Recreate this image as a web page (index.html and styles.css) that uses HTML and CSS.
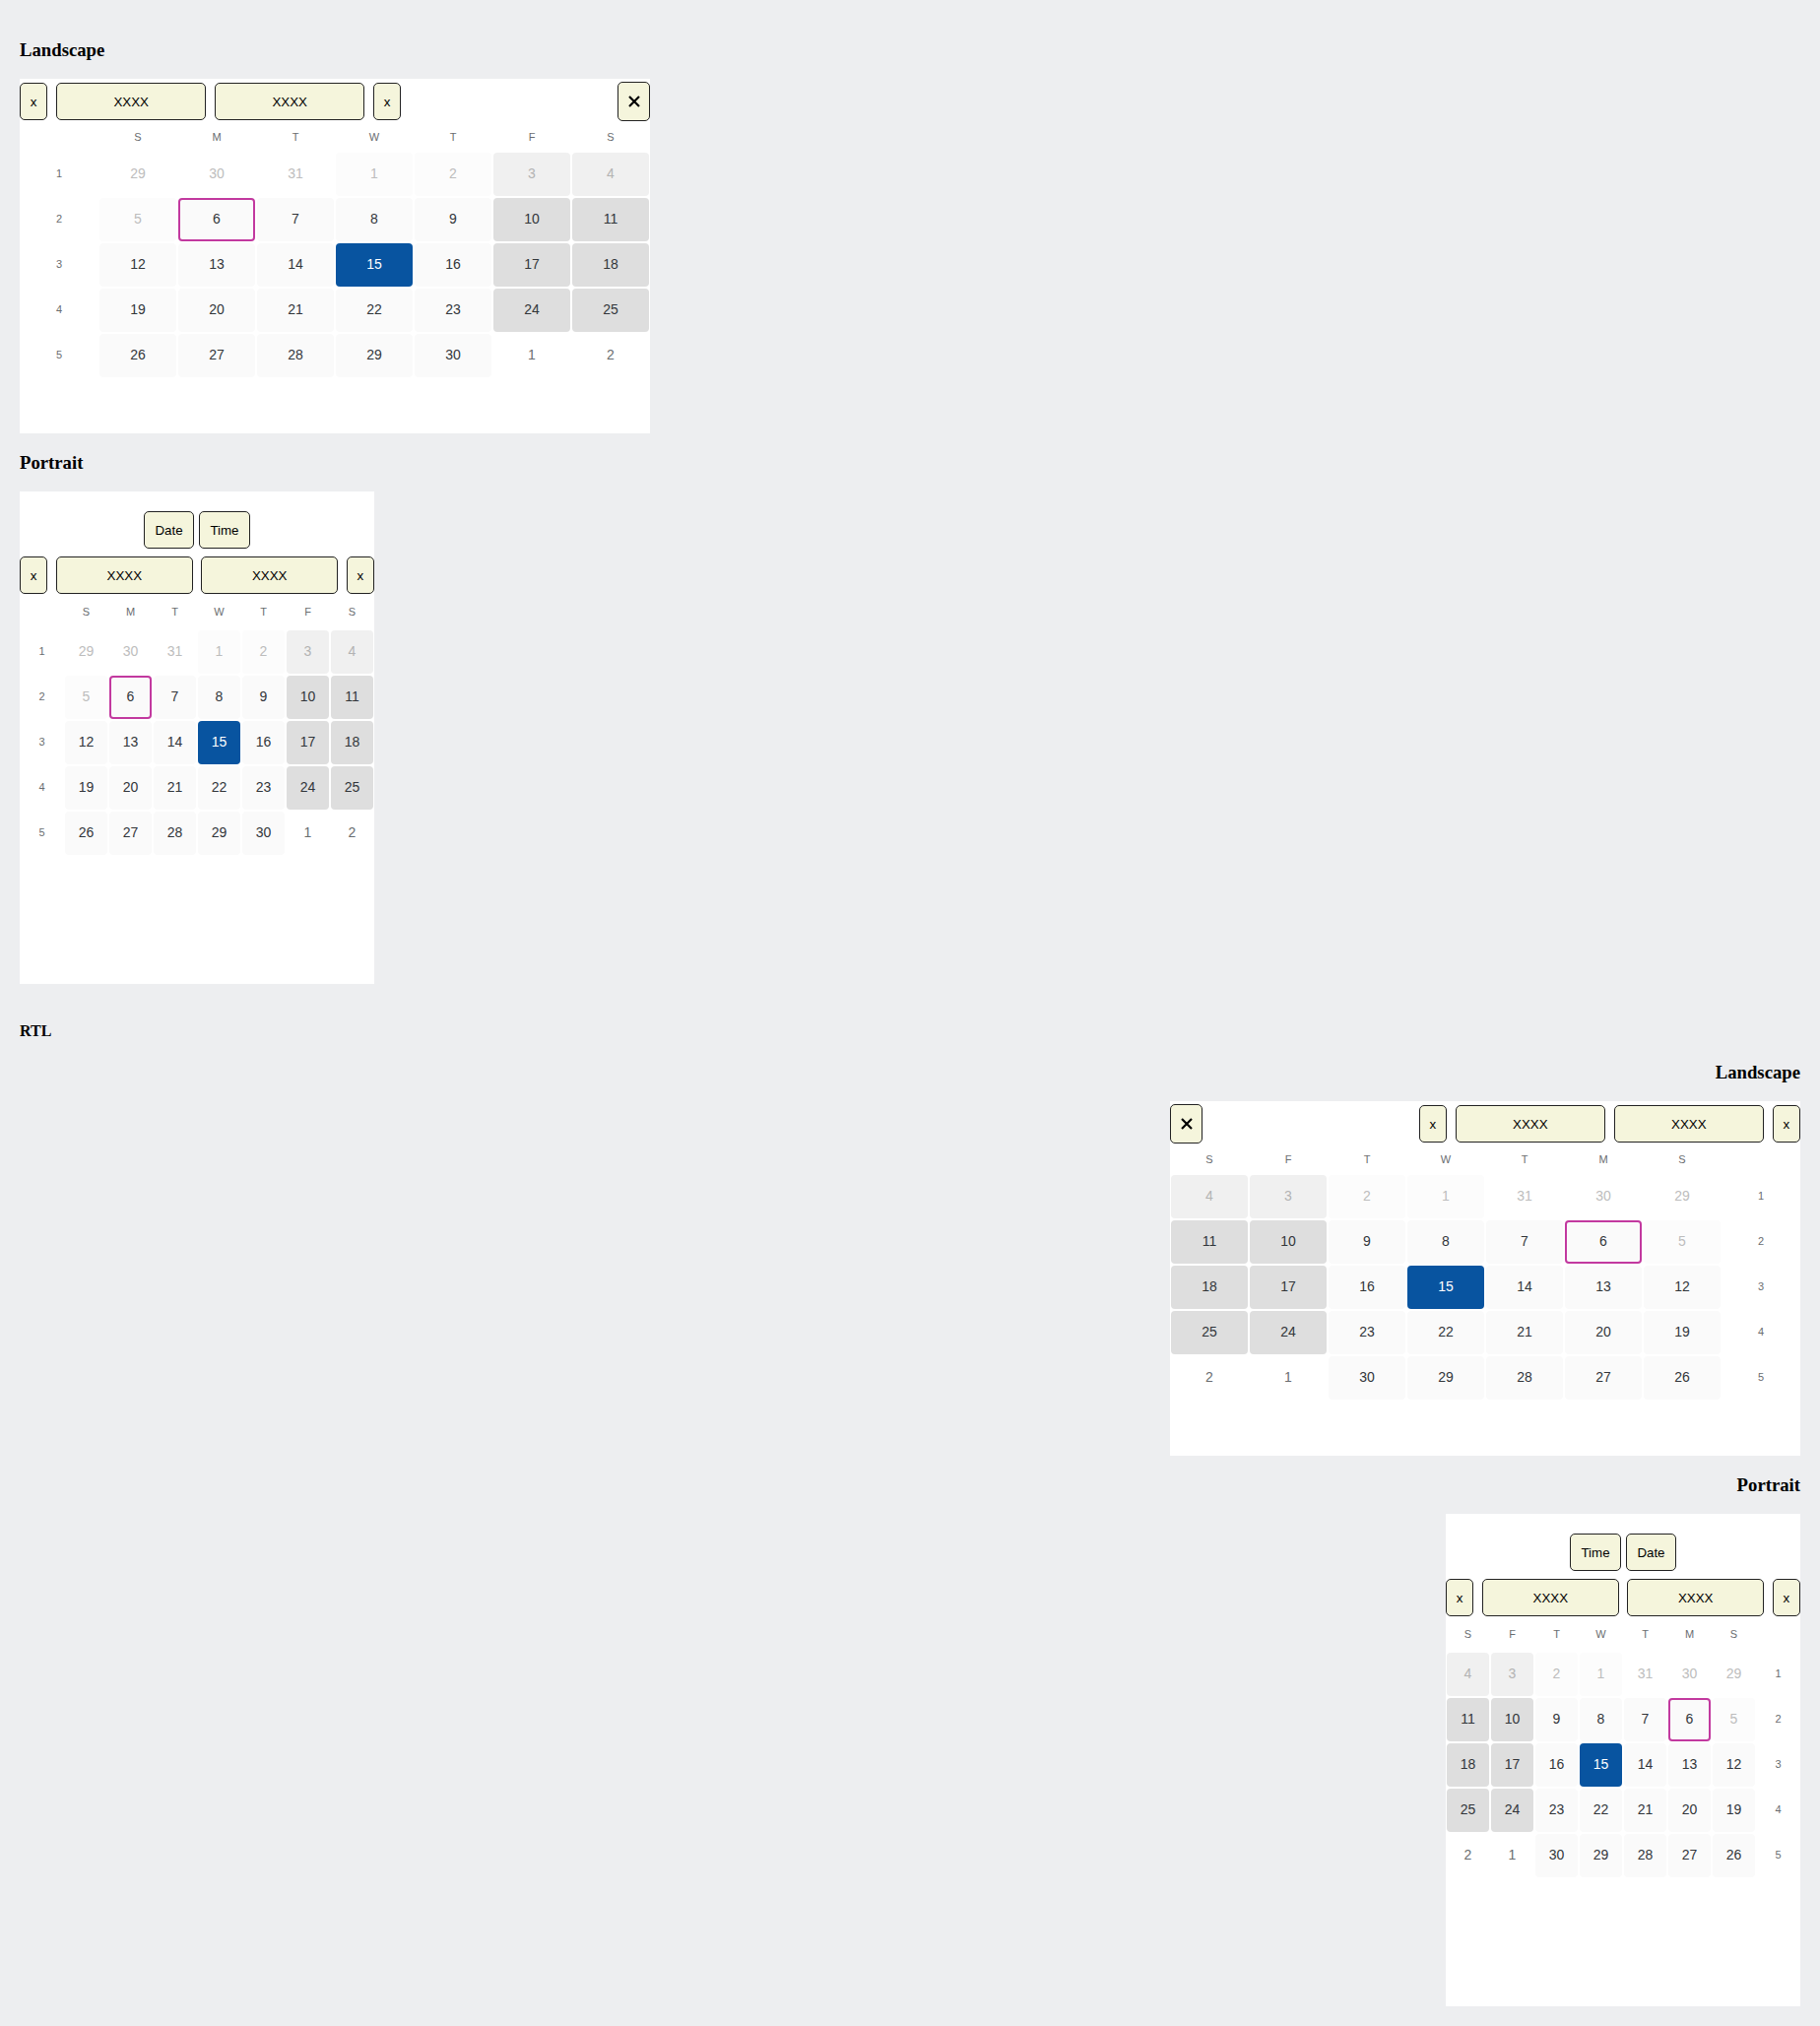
FILE: index.html
```html
<!DOCTYPE html>
<html lang="en">
<head>
<meta charset="utf-8">
<title>Date picker</title>
<link rel="stylesheet" href="styles.css">
</head>
<body>
<div class="page">
  <h3 class="title">Landscape</h3>
  <div class="picker landscape">
    <div class="toolbar">
      <button class="btn btn-x">x</button>
      <button class="btn btn-field">XXXX</button>
      <button class="btn btn-field">XXXX</button>
      <button class="btn btn-x">x</button>
      <button class="btn btn-close"><svg width="12" height="12" viewBox="0 0 12 12"><path d="M1 1L11 11M11 1L1 11" stroke="#000" stroke-width="2.2"/></svg></button>
    </div>
    <div class="cal">
      <span></span><span class="wd">S</span><span class="wd">M</span><span class="wd">T</span><span class="wd">W</span><span class="wd">T</span><span class="wd">F</span><span class="wd">S</span>
      <span class="wk">1</span><span class="c o">29</span><span class="c o">30</span><span class="c o">31</span><span class="c dis">1</span><span class="c dis">2</span><span class="c we dis">3</span><span class="c we dis">4</span>
      <span class="wk">2</span><span class="c dis">5</span><span class="c foc">6</span><span class="c">7</span><span class="c">8</span><span class="c">9</span><span class="c we">10</span><span class="c we">11</span>
      <span class="wk">3</span><span class="c">12</span><span class="c">13</span><span class="c">14</span><span class="c sel">15</span><span class="c">16</span><span class="c we">17</span><span class="c we">18</span>
      <span class="wk">4</span><span class="c">19</span><span class="c">20</span><span class="c">21</span><span class="c">22</span><span class="c">23</span><span class="c we">24</span><span class="c we">25</span>
      <span class="wk">5</span><span class="c">26</span><span class="c">27</span><span class="c">28</span><span class="c">29</span><span class="c">30</span><span class="c nx">1</span><span class="c nx">2</span>
    </div>
  </div>

  <h3 class="title">Portrait</h3>
  <div class="picker portrait">
    <div class="tabs">
      <button class="btn btn-tab">Date</button>
      <button class="btn btn-tab">Time</button>
    </div>
    <div class="toolbar">
      <button class="btn btn-x">x</button>
      <button class="btn btn-field">XXXX</button>
      <button class="btn btn-field">XXXX</button>
      <button class="btn btn-x">x</button>
    </div>
    <div class="cal">
      <span></span><span class="wd">S</span><span class="wd">M</span><span class="wd">T</span><span class="wd">W</span><span class="wd">T</span><span class="wd">F</span><span class="wd">S</span>
      <span class="wk">1</span><span class="c o">29</span><span class="c o">30</span><span class="c o">31</span><span class="c dis">1</span><span class="c dis">2</span><span class="c we dis">3</span><span class="c we dis">4</span>
      <span class="wk">2</span><span class="c dis">5</span><span class="c foc">6</span><span class="c">7</span><span class="c">8</span><span class="c">9</span><span class="c we">10</span><span class="c we">11</span>
      <span class="wk">3</span><span class="c">12</span><span class="c">13</span><span class="c">14</span><span class="c sel">15</span><span class="c">16</span><span class="c we">17</span><span class="c we">18</span>
      <span class="wk">4</span><span class="c">19</span><span class="c">20</span><span class="c">21</span><span class="c">22</span><span class="c">23</span><span class="c we">24</span><span class="c we">25</span>
      <span class="wk">5</span><span class="c">26</span><span class="c">27</span><span class="c">28</span><span class="c">29</span><span class="c">30</span><span class="c nx">1</span><span class="c nx">2</span>
    </div>
  </div>

  <h4 class="rtl-label">RTL</h4>
  <div class="rtl" dir="rtl">
    <h3 class="title">Landscape</h3>
    <div class="picker landscape">
      <div class="toolbar">
        <button class="btn btn-x">x</button>
        <button class="btn btn-field">XXXX</button>
        <button class="btn btn-field">XXXX</button>
        <button class="btn btn-x">x</button>
        <button class="btn btn-close"><svg width="12" height="12" viewBox="0 0 12 12"><path d="M1 1L11 11M11 1L1 11" stroke="#000" stroke-width="2.2"/></svg></button>
      </div>
      <div class="cal">
        <span></span><span class="wd">S</span><span class="wd">M</span><span class="wd">T</span><span class="wd">W</span><span class="wd">T</span><span class="wd">F</span><span class="wd">S</span>
        <span class="wk">1</span><span class="c o">29</span><span class="c o">30</span><span class="c o">31</span><span class="c dis">1</span><span class="c dis">2</span><span class="c we dis">3</span><span class="c we dis">4</span>
        <span class="wk">2</span><span class="c dis">5</span><span class="c foc">6</span><span class="c">7</span><span class="c">8</span><span class="c">9</span><span class="c we">10</span><span class="c we">11</span>
        <span class="wk">3</span><span class="c">12</span><span class="c">13</span><span class="c">14</span><span class="c sel">15</span><span class="c">16</span><span class="c we">17</span><span class="c we">18</span>
        <span class="wk">4</span><span class="c">19</span><span class="c">20</span><span class="c">21</span><span class="c">22</span><span class="c">23</span><span class="c we">24</span><span class="c we">25</span>
        <span class="wk">5</span><span class="c">26</span><span class="c">27</span><span class="c">28</span><span class="c">29</span><span class="c">30</span><span class="c nx">1</span><span class="c nx">2</span>
      </div>
    </div>

    <h3 class="title">Portrait</h3>
    <div class="picker portrait">
      <div class="tabs">
        <button class="btn btn-tab">Date</button>
        <button class="btn btn-tab">Time</button>
      </div>
      <div class="toolbar">
        <button class="btn btn-x">x</button>
        <button class="btn btn-field">XXXX</button>
        <button class="btn btn-field">XXXX</button>
        <button class="btn btn-x">x</button>
      </div>
      <div class="cal">
        <span></span><span class="wd">S</span><span class="wd">M</span><span class="wd">T</span><span class="wd">W</span><span class="wd">T</span><span class="wd">F</span><span class="wd">S</span>
        <span class="wk">1</span><span class="c o">29</span><span class="c o">30</span><span class="c o">31</span><span class="c dis">1</span><span class="c dis">2</span><span class="c we dis">3</span><span class="c we dis">4</span>
        <span class="wk">2</span><span class="c dis">5</span><span class="c foc">6</span><span class="c">7</span><span class="c">8</span><span class="c">9</span><span class="c we">10</span><span class="c we">11</span>
        <span class="wk">3</span><span class="c">12</span><span class="c">13</span><span class="c">14</span><span class="c sel">15</span><span class="c">16</span><span class="c we">17</span><span class="c we">18</span>
        <span class="wk">4</span><span class="c">19</span><span class="c">20</span><span class="c">21</span><span class="c">22</span><span class="c">23</span><span class="c we">24</span><span class="c we">25</span>
        <span class="wk">5</span><span class="c">26</span><span class="c">27</span><span class="c">28</span><span class="c">29</span><span class="c">30</span><span class="c nx">1</span><span class="c nx">2</span>
      </div>
    </div>
  </div>
</div>
</body>
</html>
```

FILE: styles.css
```css
html, body {
  margin: 0;
  padding: 0;
}

body {
  background: #edeef0;
  color: #000;
}

.page {
  padding: 21px 20px 20px;
}

.title {
  font: bold 18.72px/22px "Liberation Serif", "Times New Roman", serif;
  margin: 19px 0 18px;
}

.rtl-label {
  font: bold 16px/20px "Liberation Serif", "Times New Roman", serif;
  margin: 38px 0 21px;
}

.picker {
  background: #fff;
  box-sizing: border-box;
}

.picker.landscape {
  width: 640px;
  height: 360px;
}

.picker.portrait {
  width: 360px;
  height: 500px;
  padding-top: 20px;
}

.btn {
  font: 13.333px "Liberation Sans", Arial, sans-serif;
  color: #000;
  background: #f5f5dc;
  border: 1px solid #222;
  border-radius: 5px;
  padding: 0;
  margin: 0;
  height: 38px;
  box-sizing: border-box;
  display: flex;
  align-items: center;
  justify-content: center;
}

.btn-x {
  width: 28.4px;
  flex: none;
}

.btn-tab {
  padding: 0 10.6px;
}

.btn-close {
  width: 33px;
  height: 40px;
  margin-inline-start: auto;
  flex: none;
}

.btn-close svg {
  display: block;
}

.toolbar {
  display: flex;
  align-items: center;
  gap: 8.6px;
}

.landscape .toolbar {
  height: 40px;
  padding-top: 3px;
}

.landscape .btn-field {
  width: 152.4px;
  flex: none;
}

.portrait .btn-field {
  flex: 1;
}

.tabs {
  display: flex;
  justify-content: center;
  gap: 4.6px;
  margin-bottom: 8px;
}

.cal {
  display: grid;
  font-family: "Liberation Sans", Arial, sans-serif;
}

.landscape .cal {
  grid-template-columns: repeat(8, 80px);
  grid-template-rows: 31px repeat(5, 46px);
}

.portrait .cal {
  grid-template-columns: repeat(8, 45px);
  grid-template-rows: 36px repeat(5, 46px);
}

.wd,
.wk {
  display: flex;
  align-items: center;
  justify-content: center;
  font-size: 11px;
  color: #6a6d70;
}

.wk {
  padding-bottom: 2px;
}

.c {
  margin: 1px;
  padding-bottom: 2px;
  border-radius: 4px;
  box-sizing: border-box;
  display: flex;
  align-items: center;
  justify-content: center;
  font-size: 14px;
  color: #32363a;
  background: #fafafa;
}

.c.o {
  background: transparent;
  color: #bdbdbd;
}

.c.dis {
  background: #fcfcfc;
  color: #bdbdbd;
}

.c.we {
  background: #dedede;
}

.c.we.dis {
  background: #f0f0f0;
  color: #b3b3b3;
}

.c.nx {
  background: transparent;
  color: #6a6d70;
}

.c.sel {
  background: #0854a0;
  color: #fff;
}

.c.foc {
  border: 2px solid #c2399f;
}
```
